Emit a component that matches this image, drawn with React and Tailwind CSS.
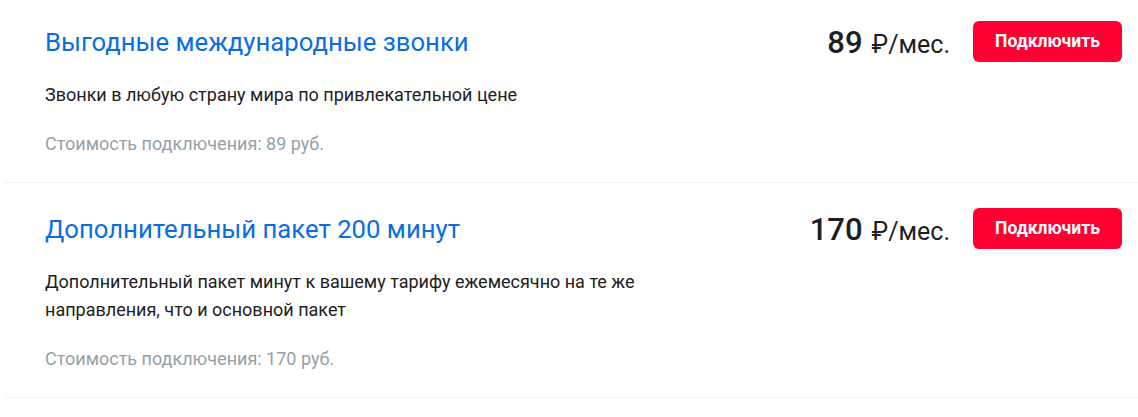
const options = [
  {
    title: "Выгодные международные звонки",
    description: "Звонки в любую страну мира по привлекательной цене",
    price: "89",
    fee: "Стоимость подключения: 89 руб.",
  },
  {
    title: "Дополнительный пакет 200 минут",
    description:
      "Дополнительный пакет минут к вашему тарифу ежемесячно на те же направления, что и основной пакет",
    price: "170",
    fee: "Стоимость подключения: 170 руб.",
  },
];

export default function App() {
  return (
    <div className="w-[1138px] h-[417px] overflow-hidden bg-white font-['Roboto',sans-serif]">
      <div className="ml-[5px] -mt-[4px]">
        {options.map((item, index) => (
          <div key={index} className="flex justify-between border-b border-[#f0f1f4] pl-[40px] pr-[16px] pt-[25px] pb-[24px]">
            {/* Left: title, text, fee */}
            <div className="w-[660px]">
              <h3 className="text-[25.7px] leading-[32px] text-[#0a6ee2] mt-[5px]">{item.title}</h3>
              <p className="text-[18px] leading-[28px] text-[#1d2023] mt-[23px]">{item.description}</p>
              <p className="text-[18px] leading-[28px] text-[#969fa8] mt-[21px]">{item.fee}</p>
            </div>

            {/* Right: price + button */}
            <div className="flex items-start gap-[23px]">
              <div className="flex items-baseline gap-[9px] mt-[3px] text-[#1d2023]">
                <span className="text-[31px] leading-[38px] font-medium">{item.price}</span>
                <span className="text-[25px] leading-[38px]">₽/мес.</span>
              </div>
              <button className="w-[149px] h-[41px] rounded-[6px] bg-[#ff0032] text-white text-[17.5px] font-bold">
                Подключить
              </button>
            </div>
          </div>
        ))}
      </div>
    </div>
  );
}
